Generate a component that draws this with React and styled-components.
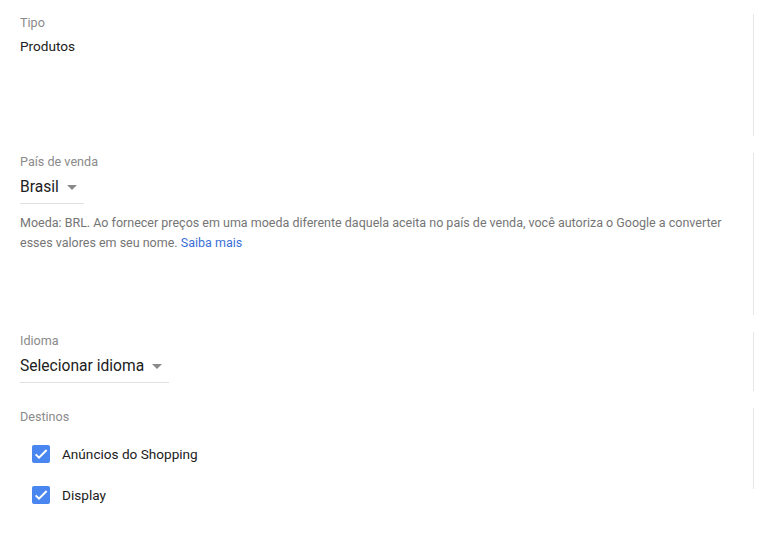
import React from "react";
import styled, { createGlobalStyle } from "styled-components";

const GlobalStyle = createGlobalStyle`
	body {
		margin: 0;
		background: #ffffff;
		font-family: Roboto, "Noto Sans", Arial, sans-serif;
	}
`;

const Page = styled.div`
	display: flex;
	flex-direction: column;
	gap: 17px;
	padding: 14px 0 50px;
	width: 754px;
`;

const Section = styled.section`
	display: flex;
	flex-direction: column;
	height: ${(props) => props.height}px;
	padding-left: 20px;
	border-right: 1px solid #e6e6e6;
	box-sizing: border-box;

	& > * {
		flex-shrink: 0;
	}
`;

const Label = styled.div`
	margin-top: 1px;
	font-size: 12.6px;
	line-height: 16px;
	color: #8a8a8a;
`;

const Value = styled.div`
	margin-top: 5px;
	font-size: 13.6px;
	line-height: 20px;
	color: #212121;
`;

const Dropdown = styled.div`
	display: inline-flex;
	align-self: flex-start;
	align-items: center;
	gap: 8px;
	margin-top: 5px;
	padding-right: 7px;
	height: 24px;
	padding-bottom: 4px;
	border-bottom: 1px solid #e0e0e0;
	font-size: 15.6px;
	color: #212121;
`;

const Caret = styled.span`
	width: 0;
	height: 0;
	border-left: 5px solid transparent;
	border-right: 5px solid transparent;
	border-top: 5px solid #8a8a8a;
	margin-top: 1px;
`;

const Helper = styled.p`
	margin: 9px 0 0;
	width: 712px;
	font-size: 12.5px;
	line-height: 20px;
	color: #757575;
`;

const Link = styled.a`
	color: #3b6fd6;
	text-decoration: none;
`;

const Options = styled.div`
	display: flex;
	flex-direction: column;
	gap: 23px;
	margin-top: 20px;
	padding-left: 12px;
`;

const Option = styled.label`
	display: flex;
	align-items: center;
	gap: 12px;
	height: 18px;
	font-size: 13.6px;
	color: #212121;
`;

const Box = styled.span`
	display: flex;
	align-items: center;
	justify-content: center;
	width: 18px;
	height: 18px;
	border-radius: 2px;
	background: #4a86ef;
`;

const Check = () => (
	<svg width="16" height="16" viewBox="0 0 24 24">
		<path d="M4 12.5l5 5L20.5 6" fill="none" stroke="#ffffff" strokeWidth="3" />
	</svg>
);

const Checkbox = ({ children }) => (
	<Option>
		<Box>
			<Check />
		</Box>
		{children}
	</Option>
);

const App = () => {
	return (
		<>
			<GlobalStyle />
			<Page>
				<Section height={122}>
					<Label>Tipo</Label>
					<Value>Produtos</Value>
				</Section>
				<Section height={162}>
					<Label>País de venda</Label>
					<Dropdown>
						Brasil <Caret />
					</Dropdown>
					<Helper>
						Moeda: BRL. Ao fornecer preços em uma moeda diferente daquela aceita no país de venda, você autoriza o Google a converter esses valores em seu nome.{" "}
						<Link href="#">Saiba mais</Link>
					</Helper>
				</Section>
				<Section height={59}>
					<Label>Idioma</Label>
					<Dropdown>
						Selecionar idioma <Caret />
					</Dropdown>
				</Section>
				<Section height={81}>
					<Label>Destinos</Label>
					<Options>
						<Checkbox>Anúncios do Shopping</Checkbox>
						<Checkbox>Display</Checkbox>
					</Options>
				</Section>
			</Page>
		</>
	);
};

export default App;
